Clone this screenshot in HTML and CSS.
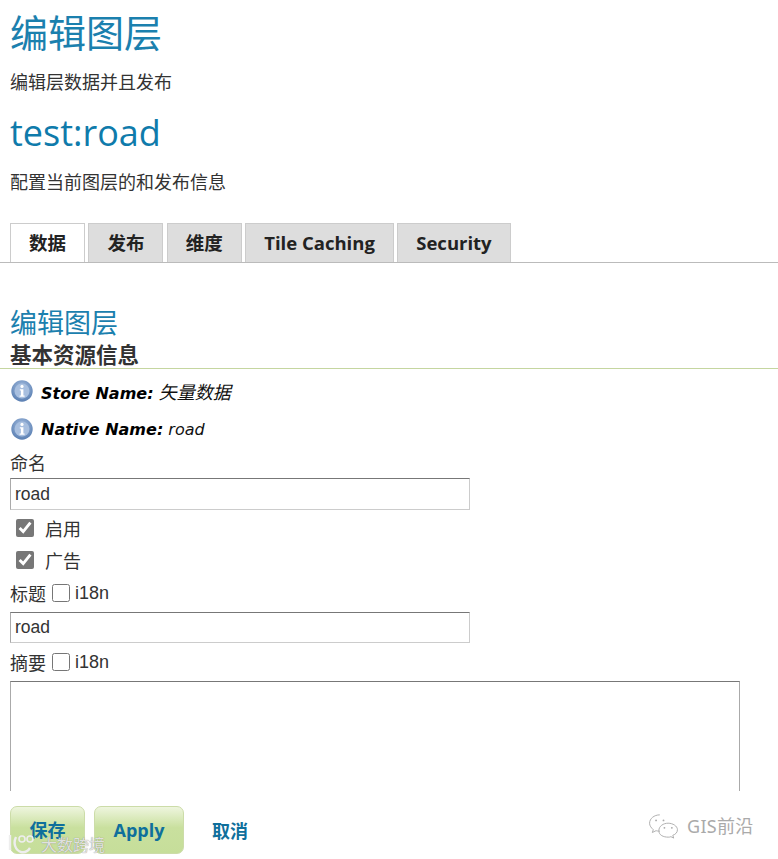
FILE: index.html
```html
<!DOCTYPE html>
<html lang="en">

<head>
    <meta charset="UTF-8">
    <meta name="viewport" content="width=device-width, initial-scale=1.0">
    <title>编辑图层</title>
    <link rel="stylesheet" href="styles.css">
</head>

<body>
    <div class="page">

        <!-- page header -->
        <h1 class="title">编辑图层</h1>
        <p class="desc">编辑层数据并且发布</p>
        <h2 class="layer-name">test:road</h2>
        <p class="desc desc-config">配置当前图层的和发布信息</p>

        <!-- tabs -->
        <ul class="tabs">
            <li class="tab active">数据</li>
            <li class="tab">发布</li>
            <li class="tab">维度</li>
            <li class="tab">Tile Caching</li>
            <li class="tab">Security</li>
        </ul>

        <h3 class="section-title">编辑图层</h3>
        <h4 class="section-sub">基本资源信息</h4>

        <!-- store info -->
        <div class="info-row">
            <svg class="info-icon" viewBox="0 0 22 22">
                <defs>
                    <radialGradient id="infoFill" cx="50%" cy="35%" r="70%">
                        <stop offset="0" stop-color="#a9c1e2"></stop>
                        <stop offset="1" stop-color="#5379ae"></stop>
                    </radialGradient>
                </defs>
                <circle cx="11" cy="11" r="10.7" fill="url(#infoFill)"></circle>
                <circle cx="11" cy="11" r="7.5" fill="#a8bfdf"></circle>
                <circle cx="11" cy="6.4" r="1.6" fill="#fff"></circle>
                <path d="M8.8 9.2h3.6v6.2h1.2v1.4H8.6v-1.4h1.3v-4.8H8.8z" fill="#fff"></path>
            </svg>
            <span class="info-text"><b>Store Name:</b> <span class="info-cjk">矢量数据</span></span>
        </div>
        <div class="info-row">
            <svg class="info-icon" viewBox="0 0 22 22">
                <circle cx="11" cy="11" r="10.7" fill="url(#infoFill)"></circle>
                <circle cx="11" cy="11" r="7.5" fill="#a8bfdf"></circle>
                <circle cx="11" cy="6.4" r="1.6" fill="#fff"></circle>
                <path d="M8.8 9.2h3.6v6.2h1.2v1.4H8.6v-1.4h1.3v-4.8H8.8z" fill="#fff"></path>
            </svg>
            <span class="info-text"><b>Native Name:</b> road</span>
        </div>

        <!-- form fields -->
        <label class="field-label">命名</label>
        <input class="text-input" type="text" value="road">

        <div class="check-list">
            <label class="check-row"><input type="checkbox" checked> <span>启用</span></label>
            <label class="check-row"><input type="checkbox" checked> <span>广告</span></label>
        </div>

        <div class="i18n-row i18n-title">标题 <input type="checkbox"> <span>i18n</span></div>
        <input class="text-input input-title" type="text" value="road">

        <div class="i18n-row i18n-abstract">摘要 <input type="checkbox"> <span>i18n</span></div>
        <textarea class="abstract"></textarea>
    </div>

    <!-- save / apply / cancel -->
    <div class="button-bar">
        <a class="btn btn-save">保存</a>
        <a class="btn btn-apply">Apply</a>
        <a class="btn-cancel">取消</a>
    </div>

    <!-- watermarks -->
    <div class="mark-left">
        <svg class="mark-left-logo" viewBox="0 0 32 20">
            <path d="M3 1v15" fill="none" stroke="#eee" stroke-width="2.4"></path>
            <path d="M9 3C6 9 8 16 14 18c4 1 7-1 9-4" fill="none" stroke="#eee" stroke-width="2.4"></path>
            <circle cx="15" cy="5" r="3" fill="none" stroke="#eee" stroke-width="1.6"></circle>
            <circle cx="23" cy="5" r="3" fill="none" stroke="#eee" stroke-width="1.6"></circle>
        </svg>
        <span>大数跨境</span>
    </div>
    <div class="mark-right">
        <svg class="wechat" viewBox="0 0 32 28">
            <path d="M12 2C6 2 1 6 1 11c0 3 2 5 4 7l-1 3 4-2c1 .4 2 .5 4 .5" fill="none" stroke="#aaa" stroke-width="1"></path>
            <path d="M21 11c-5 0-10 3-10 8s5 7 10 7c1 0 2 0 3-.5l3 1.5-1-3c3-1 5-3 5-6 0-4-5-7-10-7z" fill="none" stroke="#aaa" stroke-width="1"></path>
            <circle cx="8" cy="8" r="1" fill="#aaa"></circle>
            <circle cx="16" cy="8" r="1" fill="#aaa"></circle>
            <circle cx="17" cy="16" r="1" fill="#aaa"></circle>
            <circle cx="25" cy="16" r="1" fill="#aaa"></circle>
        </svg>
        <span>GIS前沿</span>
    </div>
</body>

</html>
```

FILE: styles.css
```css
html,
body {
    height: 100%;
}

body {
    margin: 0;
    background: #fff;
    color: #333;
    font-family: "DejaVu Sans", "Noto Sans CJK SC", sans-serif;
    overflow: hidden;
    position: relative;
}

.page {
    height: 791px;
    overflow: hidden;
    padding-left: 10px;
}

.title {
    margin: 0;
    padding-top: 6px;
    height: 50px;
    font-size: 38px;
    line-height: 50px;
    font-weight: 400;
    color: #1b80ae;
    font-family: "Noto Sans CJK SC", sans-serif;
}

.desc {
    margin: 13px 0 0;
    font-size: 18px;
    line-height: 24px;
    color: #333;
    font-family: "Noto Sans CJK SC", sans-serif;
}

.layer-name {
    margin: 15px 0 0;
    height: 50px;
    font-size: 36px;
    line-height: 50px;
    font-weight: 400;
    color: #0f7bab;
    font-family: "Open Sans", sans-serif;
}

.desc-config {
    margin-top: 11px;
}

.tabs {
    list-style: none;
    margin: 30px 0 0 -10px;
    padding: 0 0 0 10px;
    display: flex;
    gap: 3.4px;
    height: 39px;
    border-bottom: 1px solid #bbb;
}

.tab {
    height: 39px;
    box-sizing: border-box;
    padding: 0 18px;
    background: #ddd;
    border: 1px solid #ccc;
    border-bottom: none;
    font-size: 18.5px;
    font-weight: 700;
    line-height: 37px;
    color: #222;
    font-family: "Open Sans", "Noto Sans CJK SC", sans-serif;
}

.tab.active {
    background: #fff;
}

.section-title {
    margin: 42px 0 0;
    font-size: 27px;
    line-height: 34px;
    font-weight: 400;
    color: #1b80ae;
    font-family: "Noto Sans CJK SC", sans-serif;
}

.section-sub {
    margin: 1px 0 3px -10px;
    padding-left: 10px;
    font-size: 21.5px;
    line-height: 28px;
    height: 28px;
    font-weight: 700;
    color: #333;
    border-bottom: 1px solid #c5d6a0;
    font-family: "Noto Sans CJK SC", sans-serif;
}

.info-row {
    display: flex;
    align-items: center;
    gap: 8px;
    height: 38px;
    margin-left: 1px;
}

.info-icon {
    width: 22px;
    height: 22px;
}

.info-text {
    font-size: 16px;
    font-style: italic;
    color: #111;
    font-family: "DejaVu Sans", "Noto Sans CJK SC", sans-serif;
}

.info-text b {
    color: #000;
}

.info-cjk {
    font-size: 18px;
}

.field-label {
    display: block;
    margin-top: 1px;
    padding-bottom: 3px;
    font-size: 18px;
    line-height: 26px;
    color: #333;
    font-family: "Noto Sans CJK SC", sans-serif;
}

.text-input {
    display: block;
    box-sizing: border-box;
    width: 460px;
    height: 32px;
    padding: 0 4px;
    border: 1px solid #ccc;
    border-top-color: #777;
    border-left-color: #aaa;
    font-size: 17.5px;
    color: #333;
    font-family: "Liberation Sans", sans-serif;
    outline: none;
}

.check-list {
    margin-top: 2px;
}

.check-row {
    display: flex;
    align-items: center;
    gap: 11px;
    height: 32px;
    margin-left: 6px;
    font-size: 18px;
    line-height: 24px;
    color: #333;
    font-family: "Noto Sans CJK SC", sans-serif;
}

.check-row input {
    margin: 0;
    width: 18px;
    height: 18px;
    accent-color: #777;
}

.i18n-row {
    display: flex;
    align-items: center;
    gap: 6px;
    height: 35px;
    font-size: 18px;
    line-height: 24px;
    color: #333;
    font-family: "Noto Sans CJK SC", sans-serif;
}

.i18n-row input {
    margin: 0;
    width: 18px;
    height: 18px;
}

.i18n-row span {
    font-family: "Liberation Sans", sans-serif;
    margin-left: -1px;
}

.i18n-title {
    margin: -1px 0 2px;
}

.input-title {
    height: 31px;
}

.i18n-abstract {
    height: 38px;
}

.abstract {
    display: block;
    box-sizing: border-box;
    width: 730px;
    height: 200px;
    border: 1px solid #aaa;
    border-top-color: #777;
    outline: none;
    resize: none;
}

.button-bar {
    display: flex;
    align-items: center;
    gap: 9px;
    padding: 15px 0 0 10px;
}

.btn {
    box-sizing: border-box;
    display: block;
    height: 48px;
    line-height: 47px;
    text-align: center;
    font-size: 18px;
    font-weight: 700;
    color: #0f6f9c;
    border: 1px solid #ccdca8;
    border-radius: 7px;
    background: linear-gradient(#eef5de, #c9e09e 45%, #c6de9a);
    font-family: "Open Sans", "Noto Sans CJK SC", sans-serif;
}

.btn-save {
    width: 75px;
}

.btn-apply {
    width: 90px;
}

.btn-cancel {
    margin-left: 19px;
    font-size: 18px;
    font-weight: 700;
    color: #0f6f9c;
    font-family: "Noto Sans CJK SC", sans-serif;
}

.mark-left {
    position: absolute;
    left: 7px;
    top: 834px;
    display: flex;
    align-items: center;
    gap: 2px;
    color: rgba(238, 238, 238, 0.9);
    font-size: 16px;
    line-height: 20px;
    font-family: "Noto Sans CJK SC", sans-serif;
    text-shadow: 0 0 1px #777;
}

.mark-left-logo {
    width: 32px;
    height: 20px;
}

.mark-right {
    position: absolute;
    left: 648px;
    top: 813px;
    display: flex;
    align-items: center;
    gap: 8px;
    color: #aaa;
    font-size: 18px;
    line-height: 24px;
    letter-spacing: 0.3px;
    font-family: "Noto Sans", "Noto Sans CJK SC", sans-serif;
}

.wechat {
    width: 31px;
    height: 26px;
}
```
